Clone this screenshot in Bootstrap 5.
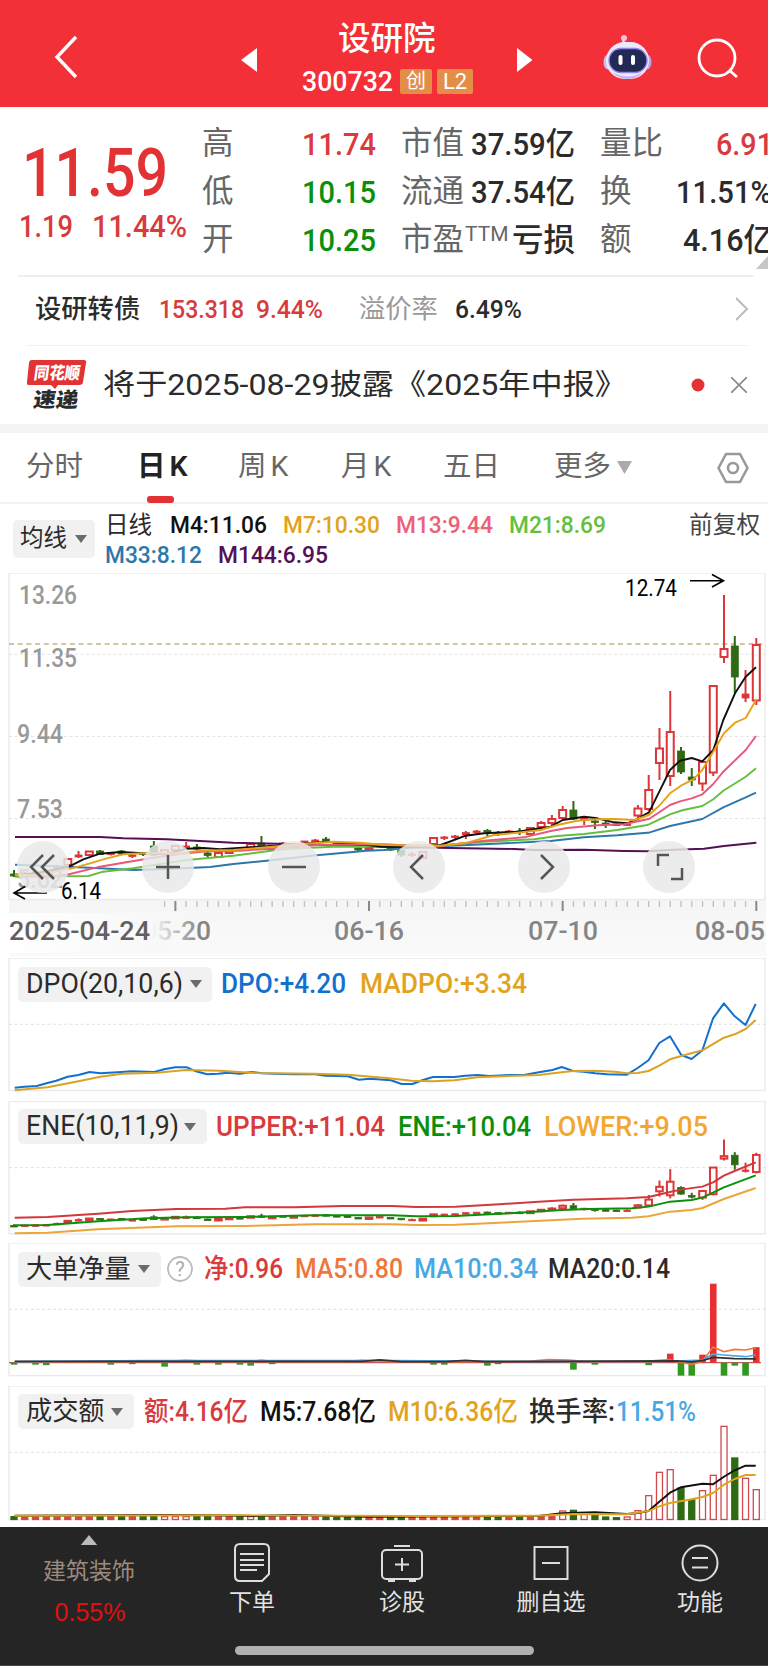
<!DOCTYPE html>
<html lang="zh-CN">
<head>
<meta charset="utf-8">
<meta name="viewport" content="width=device-width, initial-scale=1">
<title>设研院 300732</title>
<link href="https://cdn.jsdelivr.net/npm/bootstrap@5.3.0/dist/css/bootstrap.min.css" rel="stylesheet">
<style>
:root{--up:#e33234;--rise:#d93a3c;--down:#0a8f0a;--ink:#2b2b2b;--mute:#666;--hair:#efefef}
body{width:768px;height:1666px;margin:0;background:#fff;color:var(--ink);overflow:hidden;font-family:Roboto,"Noto Sans CJK SC",sans-serif;line-height:1}
svg{display:block}
.lay{display:grid;align-items:center;align-content:center}
.fit{display:inline-block;white-space:nowrap;transform-origin:0 50%;justify-self:start}
.t-up{color:var(--rise)}.t-dn{color:var(--down)}.t-mute{color:var(--mute)}.t-soft{color:#999}
.c-gold{color:#e2a31c}.c-black{color:#111}.c-blue{color:#1270cf}.c-sky{color:#48a8e4}.c-orange{color:#f0763c}.c-amber{color:#f2a732}
.c-pink{color:#ec6078}.c-lime{color:#65bf3f}.c-steel{color:#2f77a8}.c-plum{color:#541054}
.topbar{height:107px;background:#f33038;color:#fff;grid-template-columns:241px 61px 215px 86px 94px 1fr}
.topbar .back{margin:7px 0 0 49px}.topbar .step{margin-top:12px}.topbar .bot{margin-top:8px}.topbar .find{margin-top:9px}
.topbar h1{font-size:32.5px;line-height:36px;margin:8px 0 0 36px;font-weight:500}
.code{font-size:28.5px;height:25px;line-height:26px;font-weight:500;width:98px}
.coderow{margin-top:12px}
.tagbox{background:#e48d46;width:32px;height:25px;line-height:25px;font-size:20px;border-radius:2px;text-align:center}
.tagbox.l2{width:36px;font-size:22px;margin-left:5px}
.quote{height:168px;grid-template-columns:202px 100px 99px 199px 168px;overflow:hidden;position:relative}
.last{padding:1px 0 0 19px}
.price{font-size:67px;line-height:68px;font-weight:500;color:var(--up);padding-left:3px}
.chg{font-size:32px;line-height:38px;color:var(--rise);font-weight:500}
.chg>div{width:73px}
.cells{display:grid;grid-template-rows:repeat(3,48px);line-height:48px;font-size:31.5px;align-items:center;padding-top:1px}
.cells .fit{font-size:32px;font-weight:500}
.k70{width:70px}.k64{width:64px}.ttm{width:47px;font-size:21px;line-height:36px}.k116{width:116px}.k76{width:76px}.k83{width:83px}
.corner{position:absolute;right:0;bottom:6px}
.bond{height:70px;margin:0 14px 0 18px;padding-bottom:3px;border-top:2px solid var(--hair);font-size:26.3px;grid-template-columns:17px 124px 97px 103px 96px 281px 1fr;font-weight:500}
.notice{height:79px;margin:0 20px 0 27px;border-top:1.5px solid var(--hair);font-size:29px;grid-template-columns:76px 588px 40px 1fr}
.band{height:9px;background:#f4f4f4}
.tabs{height:71px;border-bottom:2px solid #f1f1f1;font-size:28.5px;color:var(--mute);grid-template-columns:26px 111px 101px 103px 102px 111px 63px 100px 1fr;position:relative}
.tabs .on{color:#222;font-weight:600}
.tabs .on::after{content:"";position:absolute;left:147px;bottom:-1px;width:27px;height:7px;border-radius:3px;background:var(--up)}
.pick{background:#f1f1f1;border-radius:5px;color:var(--ink)}
.tri{width:0;height:0;border:6.5px solid transparent;border-top:8px solid #6b6b6b;border-bottom:0}
.ma{height:69px;font-size:24.5px;font-weight:500;grid-template-columns:13px 92px 1fr 79px}
.ma .pick{width:82px;height:38px;font-size:23.5px;font-weight:400;grid-template-columns:7px 55px 1fr}
.ma .day{font-size:23.5px;font-weight:400}
.ma .adj{font-size:23.7px;line-height:30px;padding-top:1px;color:#444;font-weight:400}
.r1,.r2{grid-template-columns:65px 113px 113px 113px 1fr;height:30px;line-height:30px;position:relative;top:1.5px}
.r2{grid-template-columns:113px 1fr}
.stage{position:relative;height:385px}
.tools{position:absolute;left:17px;top:268px;gap:73.3px;display:flex}
.tools button{width:52px;height:52px;border:0;padding:0;border-radius:50%;background:rgba(232,232,232,.84)}
.tools svg{fill:none;stroke:#555;stroke-width:2.5}
.panel{position:relative;height:142.67px}
.panel.end{height:141.5px}
.legend{position:absolute;left:18px;right:0;top:8px;height:36px;line-height:36px;font-size:27px;font-weight:500;align-items:center}
.legend .pick{height:35px;line-height:35px;font-weight:400;padding-left:8px;align-items:center;display:flex}
.legend .pick.cj{font-size:26.2px}
.lg1{grid-template-columns:203px 139px 1fr}.lg1 .pick{width:194px}.lg1 .pick>div{width:164px}
.lg2{grid-template-columns:198px 182px 146px 1fr}.lg2 .pick{width:189px}.lg2 .pick>div{width:158px}
.lg3{grid-template-columns:149px 37px 91px 119px 134px 1fr}.lg3 .pick{width:143px}.lg3 .pick>div{width:112px}
.lg4{grid-template-columns:126px 116px 128px 141px 87px 1fr}.lg4 .pick{width:116px}.lg4 .pick>div{width:85px}
.dock{position:relative;height:138.5px;background:#252525;color:#e2e2e2;grid-template-columns:182px 140px 160px 138px 1fr;font-size:23px;border-bottom:1px solid #4a4345;align-content:start}
.dock a{color:inherit;text-decoration:none;display:flex;flex-direction:column;align-items:center;height:100px;padding-top:16px}
.dock a span{line-height:24px;margin-top:8px}
.dock svg{fill:none;stroke:#ddd;stroke-width:2}
.dock a.sector{padding:8px 4px 0 0;color:#9c8b7e}
.dock a.sector span{margin-top:15px}
.dock a.sector svg{fill:#bbb;stroke:none}
.dock a.fn{padding-left:12px}
.pct{color:#e01010;font:25px/30px 'Liberation Sans',sans-serif;padding-top:13px;margin-left:2px}
.homebar{position:absolute;left:235px;top:118.5px;width:299px;height:9px;border-radius:5px;background:#b1b1b1}
</style>
</head>
<body>
<header class="topbar lay">
  <svg class="back" width="32" height="50" viewBox="0 0 32 50" fill="none" stroke="#fff" stroke-width="3.4"><path d="M27 5 8 25 27 45"/></svg>
  <svg class="step" width="17" height="24" viewBox="0 0 17 24"><path d="M0 12 16 0V24Z" fill="#fff"/></svg>
  <div class="d-flex flex-column">
    <h1>设研院</h1>
    <div class="coderow d-flex"><div class="code"><span class="fit" data-w="91">300732</span></div><div class="tagbox">创</div><div class="tagbox l2">L2</div></div>
  </div>
  <svg class="step" width="16" height="24" viewBox="0 0 16 24"><path d="M15.500 12 0 0V24Z" fill="#fff"/></svg>
  <svg class="bot" width="50" height="46" viewBox="0 0 50 46"><path d="M25 10Q18 7 21 3" fill="none" stroke="#f3d4ea" stroke-width="2.5"/><circle cx="21" cy="3" r="3" fill="#f7bfd5"/><ellipse cx="5" cy="27" rx="4.500" ry="7.500" fill="#c9bdf2"/><ellipse cx="44" cy="27" rx="4.500" ry="7.500" fill="#b7a6ee"/><rect x="3" y="7" width="43" height="37" rx="18.500" fill="#eee8fb"/><path d="M9 37q16 9 31 0-6 7-15 7T9 37" fill="#c5b2f0"/><rect x="6" y="13.500" width="38" height="24" rx="12" fill="#202a55" stroke="#9484e6" stroke-width="1.3"/><rect x="15.500" y="20" width="4" height="10" rx="2" fill="#fff"/><rect x="28" y="20" width="4" height="10" rx="2" fill="#fff"/></svg>
  <svg class="find" width="42" height="42" viewBox="0 0 42 42" fill="none" stroke="#fff" stroke-width="2.8"><circle cx="20" cy="21" r="18"/><path d="m32 33 8 7"/></svg>
</header>

<section class="quote lay">
  <div class="last">
    <div class="price"><span class="fit" data-w="146">11.59</span></div>
    <div class="chg d-flex"><div><span class="fit" data-w="54">1.19</span></div><span class="fit" data-w="95">11.44%</span></div>
  </div>
  <div class="cells t-mute"><div>高</div><div>低</div><div>开</div></div>
  <div class="cells"><span class="fit t-up" data-w="74">11.74</span><span class="fit t-dn" data-w="74">10.15</span><span class="fit t-dn" data-w="74">10.25</span></div>
  <div class="cells">
    <div class="d-flex"><div class="t-mute k70">市值</div><span class="fit" data-w="104">37.59亿</span></div>
    <div class="d-flex"><div class="t-mute k70">流通</div><span class="fit" data-w="104">37.54亿</span></div>
    <div class="d-flex"><div class="t-mute k64">市盈</div><div class="t-mute ttm">TTM</div><span class="fit" data-w="63">亏损</span></div>
  </div>
  <div class="cells">
    <div class="d-flex"><div class="t-mute k116">量比</div><span class="fit t-up" data-w="57">6.91</span></div>
    <div class="d-flex"><div class="t-mute k76">换</div><span class="fit" data-w="96">11.51%</span></div>
    <div class="d-flex"><div class="t-mute k83">额</div><span class="fit" data-w="91">4.16亿</span></div>
  </div>
  <svg class="corner" width="12" height="13" viewBox="0 0 12 13"><path d="M0 13 12 0V13Z" fill="#c6c6c6"/></svg>
</section>

<section class="bond lay">
  <span></span><span>设研转债</span><span class="fit t-up" data-w="85">153.318</span><span class="fit t-up" data-w="67">9.44%</span><span class="fw-normal t-soft">溢价率</span><span class="fit" data-w="67">6.49%</span>
  <svg width="14" height="26" viewBox="0 0 14 26" fill="none" stroke="#bbb" stroke-width="2"><path d="m0 2 11 11L0 24"/></svg>
</section>
<section class="notice lay">
  <svg width="60" height="50" viewBox="0 0 60 50" font-family="Noto Sans CJK SC,sans-serif" font-weight="900"><path d="M5 0H57q3 0 2 3L56 22q0 3-4 3H31l-3 4-4-4H2q-3 0-2-3L2 3Q2 0 5 0Z" fill="#e33234"/><g transform="skewX(-8)"><text x="9" y="19" font-size="17" fill="#fff" textLength="46" lengthAdjust="spacingAndGlyphs">同花顺</text><text x="12" y="47" font-size="20.500" fill="#2b2b2b" textLength="45" lengthAdjust="spacingAndGlyphs">速递</text></g></svg>
  <span class="fit" data-w="524">将于2025-08-29披露《2025年中报》</span>
  <svg width="14" height="14" viewBox="0 0 14 14"><circle cx="7" cy="7" r="6.500" fill="#e33234"/></svg>
  <svg width="16" height="16" viewBox="0 0 16 16" stroke="#888" stroke-width="1.6"><path d="m0 0 16 16M16 0 0 16"/></svg>
</section>
<div class="band"></div>

<nav class="tabs lay">
  <span></span><span>分时</span><span class="on">日<span class="ms-1">K</span></span><span>周<span class="ms-1">K</span></span><span>月<span class="ms-1">K</span></span><span>五日</span><span>更多</span>
  <svg width="15" height="13" viewBox="0 0 15 13"><path d="M0 0H15L7.500 13Z" fill="#aaa"/></svg>
  <svg width="32" height="32" viewBox="0 0 32 32" fill="none" stroke="#999" stroke-width="2.6"><path d="M9 2H23L30.500 16 23 30H9L1.500 16Z" stroke-linejoin="round"/><circle cx="16" cy="16" r="5"/></svg>
</nav>

<section class="ma lay">
  <span></span>
  <div class="pick lay"><span></span><span>均线</span><i class="tri"></i></div>
  <div>
    <div class="r1 lay"><span class="day">日线</span><span class="fit c-black" data-w="97">M4:11.06</span><span class="fit c-gold" data-w="97">M7:10.30</span><span class="fit c-pink" data-w="97">M13:9.44</span><span class="fit c-lime" data-w="97">M21:8.69</span></div>
    <div class="r2 lay"><span class="fit c-steel" data-w="97">M33:8.12</span><span class="fit c-plum" data-w="110">M144:6.95</span></div>
  </div>
  <span class="adj align-self-start">前复权</span>
</section>

<section class="stage">
  <svg id="kline" width="768" height="385" viewBox="0 573 768 385"></svg>
  <div class="tools">
    <button aria-label="最左"><svg width="52" height="52"><path d="M26 14 14 26 26 38M37 14 25 26 37 38"/></svg></button>
    <button aria-label="放大"><svg width="52" height="52"><path d="M14 26H38M26 14V38"/></svg></button>
    <button aria-label="缩小"><svg width="52" height="52"><path d="M14 26H38"/></svg></button>
    <button aria-label="向左"><svg width="52" height="52"><path d="M30 14 18 26 30 38"/></svg></button>
    <button aria-label="向右"><svg width="52" height="52"><path d="M23 14 35 26 23 38"/></svg></button>
    <button aria-label="全屏"><svg width="52" height="52"><path d="M15 25V14H26M28 38H39V27"/></svg></button>
  </div>
</section>

<section class="panel">
  <svg id="dpo" width="768" height="143" viewBox="0 958 768 143"></svg>
  <div class="legend lay lg1">
    <div class="pick"><div><span class="fit" data-w="157">DPO(20,10,6)</span></div><i class="tri"></i></div>
    <span class="fit c-blue" data-w="125">DPO:+4.20</span><span class="fit c-gold" data-w="167">MADPO:+3.34</span>
  </div>
</section>
<section class="panel">
  <svg id="ene" width="768" height="143" viewBox="0 1100.67 768 143"></svg>
  <div class="legend lay lg2">
    <div class="pick"><div><span class="fit" data-w="153">ENE(10,11,9)</span></div><i class="tri"></i></div>
    <span class="fit t-up" data-w="169">UPPER:+11.04</span><span class="fit t-dn" data-w="133">ENE:+10.04</span><span class="fit c-amber" data-w="164">LOWER:+9.05</span>
  </div>
</section>
<section class="panel">
  <svg id="big" width="768" height="143" viewBox="0 1243.33 768 143"></svg>
  <div class="legend lay lg3">
    <div class="pick cj"><div>大单净量</div><i class="tri"></i></div>
    <svg width="26" height="26" viewBox="0 0 26 26"><circle cx="13" cy="13" r="12" fill="none" stroke="#bbb" stroke-width="1.8"/><text x="13" y="20" text-anchor="middle" font-size="20" font-weight="400" fill="#aaa">?</text></svg>
    <span class="fit t-up" data-w="79">净:0.96</span><span class="fit c-orange" data-w="108">MA5:0.80</span><span class="fit c-sky" data-w="124">MA10:0.34</span><span class="fit" data-w="122">MA20:0.14</span>
  </div>
</section>
<section class="panel end">
  <svg id="vol" width="768" height="141.5" viewBox="0 1386 768 141.500"></svg>
  <div class="legend lay lg4">
    <div class="pick cj"><div>成交额</div><i class="tri"></i></div>
    <span class="fit t-up" data-w="104">额:4.16亿</span><span class="fit c-black" data-w="116">M5:7.68亿</span><span class="fit c-gold" data-w="130">M10:6.36亿</span><span class="fit" data-w="86">换手率:</span><span class="fit c-sky" data-w="80">11.51%</span>
  </div>
</section>

<footer class="dock lay">
  <a href="#" class="sector"><svg width="18" height="11"><path d="M9 0 18 11H0Z"/></svg><span>建筑装饰</span><b class="pct">0.55%</b></a>
  <a href="#"><svg width="42" height="40"><path d="M9 1H33Q38 1 38 6V31L31 38H9Q4 38 4 33V6Q4 1 9 1ZM9 11H33M9 17H33M9 22H33M9 27H26"/></svg><span>下单</span></a>
  <a href="#"><svg width="42" height="40"><rect x="1" y="7" width="40" height="29" rx="4"/><path d="M13 3H29M21 15V28M14 21.500H28M7 38h7M28 38h7"/></svg><span>诊股</span></a>
  <a href="#"><svg width="42" height="40"><path d="M4.500 4H37.500V36H4.500ZM12 20H30"/></svg><span>删自选</span></a>
  <a href="#" class="fn"><svg width="42" height="40"><circle cx="21" cy="20" r="17.500"/><path d="M13 15H29M13 24.500H29"/></svg><span>功能</span></a>
  <div class="homebar"></div>
</footer>

<script>
const RED='#dc3638',GRN='#2f6a12';
const xi=i=>756.3-(69-i)*10.758;
const line=(x1,y1,x2,y2,c,w=1,d='')=>`<line x1="${x1}" y1="${y1}" x2="${x2}" y2="${y2}" stroke="${c}" stroke-width="${w}"${d?` stroke-dasharray="${d}"`:''}/>`;
const poly=(p,c,w=1.9)=>`<polyline points="${p.map(a=>a.map(n=>n.toFixed(1)).join()).join(' ')}" fill="none" stroke="${c}" stroke-width="${w}" stroke-linejoin="round"/>`;
const pairs=s=>s.trim().split(/\s+/).map(q=>q.split(',').map(Number));
const label=(t,x,y,w,s,c,o='')=>`<text x="${x}" y="${y}" font-size="${s}" fill="${c}" textLength="${w}" lengthAdjust="spacingAndGlyphs" ${o}>${t}</text>`;

/* colour (r hollow, f filled red, g green), high, body top, body bottom, low */
const K=`g870,874,876,877 f872,873,875,876 f870,872,874,875 f869,871,873,874 f865,867,869,870 r858,859,865,866 f851,855,857,858 r851,851.500,855,856 g850,851,854.500,855 f852,853,854,855.500 g850,851,854,855 f854,855,856,858 g852,853,854.500,856 g841,846,855,856 r849,850,854,854 r845,846,850,850 f842,846,847.500,849 g844,847,849,850 g852,853,855.500,857 r852,853,857,858 r848,849,853,853 g847,848.500,850,851 r843,844,848,848 g836,843,846,847 r845,846,850,850 f842,843,845,846 r843,844,847,847 f841,841,843,843 f839,840,842,843 g837,839,841,842 g841,842,843,844 g842,843,844,845 g847,848,850,851 r847,848,850,851 f844,845,847,848 g847,848,850,851 g850,850.500,855,857 f852,854,855,857 r851,852,858,858 r837,838,844,845 f836,837,838.500,840 f835,836,837,839 f831,832.500,835,839 f830,831,832,834 g829,830.500,832,836 g831,832.500,833.500,836 f830,831,832,833 g828,831,832,835 r827,828,834,835 r821,823,827,828 r815,819,823,826 r806,810,818,820 g801,810,819,820 f817,818,819.500,825 g820,821,822,829 g820,823,824,828 g823,824,825,826 f822,824,825,826 r805,808.500,815.500,818 r775,790,809,811 r728,748.500,763,780 r691,732,776,786 g747,751,772,774 g768,777,780,786 r762,762,783.500,791 r685,686,772.500,776 r595,649,657,663 g636,646,677,693 f670,694,698,702 r638,645,700.500,705`
 .split(' ').map(s=>[s[0],...s.slice(1).split(',').map(Number)]);
function candles(f,bw){return K.map(([k,h,t,b,l],i)=>{const x=xi(i),c=k=='g'?GRN:RED;h=f(h);t=f(t);b=f(b);l=f(l);const m=Math.max(b-t,1.5);
 return line(x,h,x,t,c,2)+line(x,Math.max(b,t+m),x,l,c,2)+`<rect x="${x-bw/2}" y="${t}" width="${bw}" height="${m}" fill="${k=='r'?'#fff':c}" stroke="${c}" stroke-width="${k=='r'?2:.8}"/>`}).join('')}

/* moving averages, drawn in three stretches */
const L=p=>pairs(p).map(([a,b])=>[a/3,730+b/3]),M=p=>pairs(p).map(([a,b])=>[384+a/3,730+b/3]),R=p=>pairs(p).map(([a,b])=>[600+a/3,560+b/3]);
const avg=[
 ['#541054',L('45,321 300,321 370,325 500,328 600,333 700,338 900,343'),M('0,350 200,354 390,357 450,360 600,359 720,363 790,364 870,359 960,356 1020,348 1117,338'),[]],
 ['#2f77a8',L('45,404 150,408 300,415 400,420 500,417 630,411 700,402 800,392 950,376 1100,362'),M('0,360 100,352 300,343 500,333 600,322 700,316 790,308'),R('147,818 210,798 307,777 370,742 437,712 468,698')],
 ['#65bf3f',L('45,440 265,438 310,425 400,415 560,390 700,377 830,360 900,355 1000,350 1100,350'),M('0,348 180,346 300,335 450,328 520,318 600,312 700,300 790,285'),R('147,793 210,763 250,750 307,738 340,718 370,692 437,650 468,625')],
 ['#111',L('45,435 110,430 170,418 207,410 250,388 300,371 360,366 430,370 500,372 560,356 610,354 660,358 750,352 830,347 900,343 980,335 1100,345'),M('0,350 130,350 170,345 245,317 300,310 400,305 450,298 500,290 536,270 600,260 640,265 690,277 730,280 765,265'),R('110,777 147,757 178,695 210,630 240,602 275,594 307,604 340,570 370,480 405,400 437,350 468,322')],
 ['#e9577a',L('45,435 150,440 210,432 300,410 370,398 450,385 540,372 620,364 720,362 830,355 950,345'),M('0,343 150,350 300,332 420,322 500,303 550,294 640,286 720,283 790,268'),R('147,777 180,755 210,735 240,724 275,715 307,703 340,672 370,635 437,570 468,528')],
 ['#e6a117',L('45,435 110,435 215,415 270,400 320,385 370,373 430,370 540,370 600,362 700,360 800,352 900,343 1000,335 1080,338'),M('0,345 120,347 170,347 250,338 330,315 400,308 470,300 520,285 580,272 640,268 690,267 750,270'),R('147,765 180,735 210,700 243,677 280,658 307,630 340,575 372,520 405,488 437,474 468,420')]];
let s=`<defs><linearGradient id="ax" x2="0" y2="1"><stop stop-color="#f5f5f5"/><stop offset="1" stop-color="#fafafa"/></linearGradient><linearGradient id="fade"><stop offset="0" stop-color="#fff"/><stop offset=".76" stop-color="#f8f8f8"/><stop offset="1" stop-color="#f8f8f8" stop-opacity="0"/></linearGradient></defs>
<rect x="9" y="900" width="757" height="56" fill="url(#ax)"/><rect x="9" y="573" width="756" height="326.500" fill="#fff" stroke="#ebebeb" stroke-width="1.5"/>`;
for(const y of [654.3,736.5,818.5])s+=line(9,y,765,y,'#e4e4e4',1,'3 2.500');
s+=line(9,644,765,644,'#c5b184',1.5,'5 3.700');
[['13.26',19,604],['11.35',19,667],['9.44',17,743],['7.53',17,818],['5.62',17,888]].forEach(([t,x,y])=>s+=label(t,x,y,t.length>4?58:46,26,'#999','font-weight="500"'));
s+=candles(y=>y,7);
avg.forEach(([c,a,b,d])=>s+=poly([...a,...b,...d],c,1.9));
s+=label('12.74',625,595.5,52,24.5,'#000')+label('6.14',61,899,40,24.5,'#000');
s+=`<path d="M690 580.700H723M712 574.500 723.500 580.700 712 587M47 893H15M25 886.500 14 893 25 899" fill="none" stroke="#000" stroke-width="1.6"/>`;
for(let i=14;i<70;i++){const M=(69-i)%18==0;s+=line(xi(i),901,xi(i),M?911:907,M?'#8a8a8a':'#c2c2c2',M?2:1.4)}
[['05-20',142,69],['06-16',334,70],['07-10',528,70],['08-05',695,70]].forEach(([t,x,w])=>s+=label(t,x,939.5,w,26,'#858585','font-weight="500"'));
s+=`<rect x="0" y="913" width="200" height="40" fill="url(#fade)"/>`+label('2025-04-24',9,939.5,141,26,'#606060','font-weight="500"');
kline.innerHTML=s;

/* lower panels */
const frame=(y,h)=>`<rect x="9" y="${y}" width="756" height="${h}" fill="#fff" stroke="#ebebeb" stroke-width="1.500"/>`+line(9,y+66.3,765,y+66.3,'#e0e0e0',1,'3 2.500');
const P=p=>pairs(p).map(([a,b])=>[a/2.0417,950+b/3]),Q=p=>pairs(p).map(([a,b])=>[a/2.0417,1235+b/3]);
dpo.innerHTML=frame(958,132.5)
+poly(P('30,413 50,410 75,408 97,399 115,392 138,380 160,375 183,366 205,370 240,367 270,364 315,366 335,358 358,352 382,352 400,364 423,373 445,371 465,368 490,371 513,366 535,370 560,371 600,373 640,372 665,377 710,379 733,389 755,386 798,391 820,402 842,402 862,391 884,381 928,381 950,377 975,375 1000,378 1040,375 1070,375 1100,367 1128,360 1147,351 1170,363 1192,365 1215,370 1240,373 1280,374 1302,354 1324,331 1346,279 1368,259 1391,315 1412,327 1434,301 1456,205 1478,160 1500,199 1522,225 1543,162'),'#1270cf',2)
+poly(P('30,421 97,412 160,394 205,380 250,371 320,368 380,360 450,362 520,369 640,371 710,374 790,384 840,392 884,394 928,391 975,382 1040,378 1100,375 1147,367 1170,363 1215,362 1255,365 1280,370 1302,369 1324,363 1346,347 1368,328 1391,318 1434,301 1478,263 1500,253 1522,237 1543,210'),'#dba224',2);
ene.innerHTML=frame(1101,132.5)+candles(y=>1154.3+(y-644)*.308,6.6)
+poly(P('30,802 97,800 200,790 270,782 360,776 460,775 500,771 600,771 700,767 800,767 850,770 930,769 1020,762 1100,754 1170,748 1280,744 1324,740 1368,725 1390,718 1434,709 1456,696 1478,676 1500,662 1543,636'),'#d2383c',2)
+poly(P('30,825 97,824 200,813 300,804 380,801 500,800 640,795 800,795 850,798 930,797 1050,788 1147,779 1200,776 1290,774 1324,769 1368,754 1412,749 1434,742 1478,711 1543,675'),'#0a8f0a',2)
+poly(P('30,849 97,847 200,837 360,828 500,827 640,822 800,822 850,824 930,823 1050,815 1190,805 1290,802 1324,798 1368,784 1412,779 1434,773 1478,746 1543,713'),'#eda53a',2);
const bar=(i,a,b,c)=>`<rect x="${xi(i)-3.3}" y="${a}" width="6.600" height="${b-a}" fill="${c}"/>`;
s=frame(1243.3,132.7)+line(9,1363,761,1363,'#c95a55',1.2);
[[61,1354],[64,1355],[65,1284],[69,1347.5],[23,1360]].forEach(([i,y])=>s+=bar(i,y,1363,'#e63032'));
[[0,1365],[2,1365],[3,1365.5],[9,1365],[11,1364.5],[14,1367],[17,1365],[19,1365],[21,1365],[22,1366],[24,1364.5],[39,1365],[40,1365],[44,1366],[45,1364.5],[52,1370],[54,1365],[59,1365.5],[62,1376],[63,1376],[66,1376],[67,1366],[68,1376]].forEach(([i,y])=>s+=bar(i,1363,y,'#31991f'));
s+=poly(Q('30,382 340,380 380,377 420,380 700,381 740,377 790,380 1080,380 1120,375 1160,376 1200,381 1324,379 1368,375 1412,389 1434,380 1456,337 1478,351 1500,344 1522,346 1543,339'),'#f0763c',1.6)
+poly(Q('30,381 300,378 800,378 1100,380 1368,380 1434,376 1456,358 1478,361 1522,366 1543,361'),'#48a8e4',1.6)
+poly(Q('30,380 740,380 775,376 820,381 910,381 950,377 990,381 1380,379 1412,382 1434,378 1456,368 1500,372 1543,373'),'#333',1.8);
big.innerHTML=s;
const V={51:828,52:826,53:838,54:841,55:846,56:848,57:846,58:827,59:782,60:712,61:704,62:759,63:794,64:767,65:721,66:574,67:669,68:730,69:764};
s=frame(1386,133.5);
K.forEach(([k],i)=>{const z=V[i]||845,y=1235+z/3,g=k=='g',hollow=i>50&&!g||[14,15,16,22].includes(i);
 s+=`<rect x="${xi(i)-3}" y="${y}" width="6" height="${1519.5-y}" fill="${g?GRN:hollow?'#fff':'#d9483f'}" stroke="${g?GRN:'#d0494d'}" stroke-width="1.300"/>`});
s+=poly(Q('30,842 340,840 430,841 520,843 600,840 750,845 1100,843 1147,835 1215,832 1280,837 1302,834 1324,828 1346,800 1368,773 1390,757 1434,746 1456,748 1478,725 1500,706 1522,692 1543,692'),'#111',1.9)
+poly(Q('30,842 500,841 860,843 1100,842 1170,837 1280,838 1324,828 1346,814 1368,804 1412,793 1434,786 1456,774 1478,749 1500,732 1522,720 1543,720'),'#e2a31c',1.9);
vol.innerHTML=s;

document.querySelectorAll('.fit').forEach(e=>{const n=e.getBoundingClientRect().width,w=+e.dataset.w;e.style.transform=`scaleX(${w/n})`;e.style.marginRight=w-n+'px'});
</script>
<script src="https://cdn.jsdelivr.net/npm/bootstrap@5.3.0/dist/js/bootstrap.bundle.min.js"></script>
</body>
</html>
